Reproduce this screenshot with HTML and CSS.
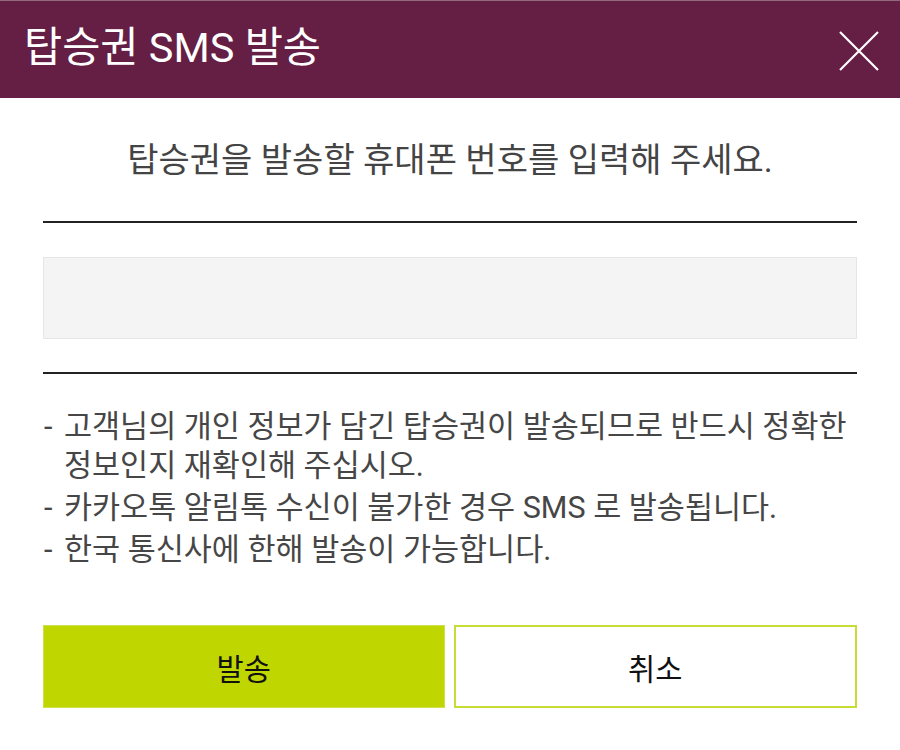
FILE: index.html
```html
<!DOCTYPE html>
<html lang="ko">
<head>
<meta charset="utf-8">
<title>탑승권 SMS 발송</title>
<link rel="stylesheet" href="styles.css">
</head>
<body>
<div class="modal">
  <header class="head">
    <h1 class="title">탑승권 SMS 발송</h1>
    <button class="close" type="button" aria-label="닫기">
      <svg width="40" height="40" viewBox="0 0 40 40"><path d="M1 1 L39 39 M39 1 L1 39" stroke="#fff" stroke-width="2.2" fill="none"/></svg>
    </button>
  </header>
  <div class="body">
    <p class="lead">탑승권을 발송할 휴대폰 번호를 입력해 주세요.</p>
    <div class="field"><input class="phone" type="tel" aria-label="휴대폰 번호"></div>
    <ul class="notes">
      <li><span class="dash">-</span><span>고객님의 개인 정보가 담긴 탑승권이 발송되므로 반드시 정확한 정보인지 재확인해 주십시오.</span></li>
      <li><span class="dash">-</span><span>카카오톡 알림톡 수신이 불가한 경우 SMS 로 발송됩니다.</span></li>
      <li><span class="dash">-</span><span>한국 통신사에 한해 발송이 가능합니다.</span></li>
    </ul>
    <div class="actions">
      <button class="btn send" type="button">발송</button>
      <button class="btn cancel" type="button">취소</button>
    </div>
  </div>
</div>
</body>
</html>
```
FILE: styles.css
```css
* { box-sizing: border-box; }
html, body { margin: 0; padding: 0; background: #fff; }
body {
  font-family: Roboto, "Noto Sans CJK KR", "Noto Sans", sans-serif;
  color: #444;
  word-break: keep-all;
}
.modal { width: 900px; height: 750px; background: #fff; }
.head {
  height: 98px;
  background: #651e44;
  border-top: 1px solid #8e6a7c;
  display: flex;
  align-items: center;
  justify-content: space-between;
  padding: 0 21px 0 24px;
}
.title {
  margin: 0;
  font-size: 41.5px;
  font-weight: 400;
  color: #fff;
  line-height: 1;
  padding-bottom: 4px;
}
.close {
  background: none;
  border: 0;
  padding: 0;
  width: 40px;
  height: 40px;
  display: flex;
  margin-top: 2px;
}
.body { padding: 40px 43px 0; }
.lead {
  margin: 0;
  text-align: center;
  font-size: 34px;
  line-height: 44px;
  color: #444;
}
.field {
  margin-top: 39px;
  border-top: 2px solid #222;
  border-bottom: 2px solid #222;
  padding: 34px 0 33px;
}
.phone {
  display: block;
  width: 100%;
  height: 82px;
  background: #f4f4f4;
  border: 1px solid #e6e6e6;
  outline: none;
}
.notes {
  list-style: none;
  margin: 33px 0 0;
  padding: 0;
  font-size: 30.5px;
  line-height: 39px;
  color: #464646;
}
.notes li { display: flex; }
.notes li + li { margin-top: 3px; }
.dash { flex: 0 0 21px; padding-left: 1px; }
.actions {
  margin-top: 56px;
  display: flex;
  gap: 9px;
}
.btn {
  flex: 1 1 0;
  height: 83px;
  font-family: inherit;
  font-size: 29.5px;
  color: #111;
  cursor: pointer;
}
.send {
  background: #bfd600;
  border: 1px solid #cfe04a;
}
.cancel {
  background: #fff;
  border: 2px solid #c8dc36;
}
```
